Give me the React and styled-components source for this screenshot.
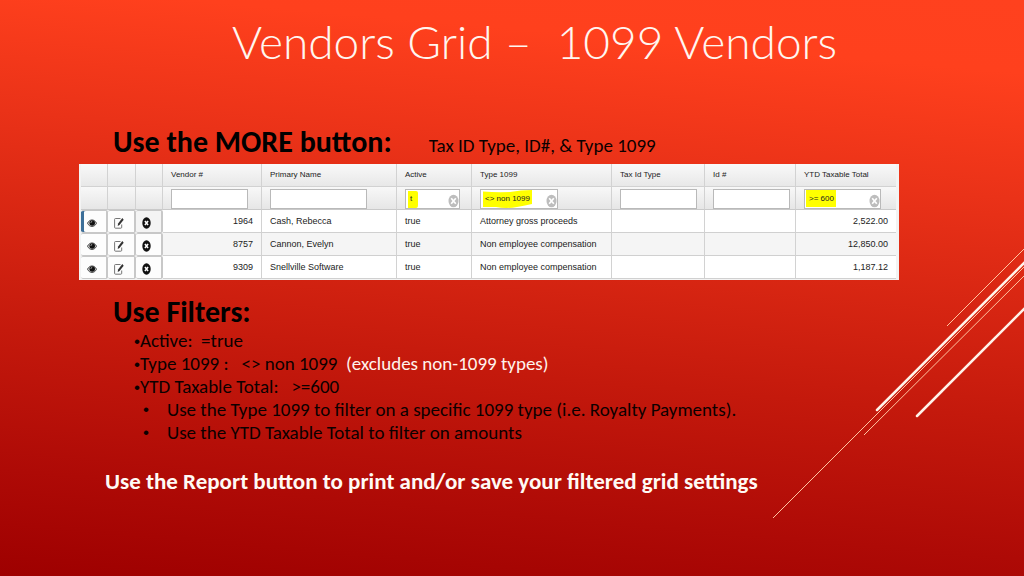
import React from "react";
import styled, { createGlobalStyle } from "styled-components";

const GlobalStyle = createGlobalStyle`
  * { box-sizing: border-box; }
  body { margin: 0; background: #9e0000; }
  input, button { font: inherit; color: inherit; }
`;

const Slide = styled.main`
  position: relative;
  min-height: 100vh;
  overflow: hidden;
  padding: 12px 125px 40px 79px;
  background: linear-gradient(185deg, #ff411e 0%, #ff401d 11%, #ea3218 30%, #c4190c 63%, #ae0a06 84%, #9e0000 100%);
  color: #0c0000;
  font-family: Carlito, Lato, sans-serif;
  font-size: 19px;
  line-height: 23px;
`;

const Title = styled.h1`
  margin: 0 0 54px 153px;
  color: #fff6f0;
  font-family: "Century Gothic", Lato, sans-serif;
  font-size: 46px;
  line-height: 60px;
  font-weight: 300;
  white-space: pre;
`;

const Intro = styled.div`
  display: flex;
  align-items: baseline;
  gap: 37px;
  padding-left: 34px;
  margin-bottom: 6px;
`;

const Heading = styled.h2`
  margin: 0;
  color: #000;
  font-size: 30px;
  line-height: 32px;
  font-weight: 700;
  white-space: nowrap;
`;

const Note = styled.p`
  margin: 0;
`;

const GridFrame = styled.div`
  height: 116px;
  padding: 0 3px 0 2px;
  background: #f3f3f3;
  margin-bottom: 16px;
`;

const Grid = styled.table`
  width: 100%;
  table-layout: fixed;
  border-collapse: separate;
  border-spacing: 0;
  color: #222;
  font-family: "Liberation Sans", Arial, sans-serif;
`;

const HeadCell = styled.th`
  height: 23px;
  padding: 0 0 0 8px;
  border-right: 1px solid #d2d2d2;
  border-bottom: 1px solid #d2d2d2;
  background: linear-gradient(#f9f9f9, #e8e8e8);
  font-size: 8px;
  line-height: 12px;
  font-weight: 400;
  text-align: left;
  white-space: nowrap;
  &:last-child { border-right: 0; }
`;

const FilterCell = styled.td`
  height: 23px;
  padding: 1px 0 0 8px;
  border-right: 1px solid #d2d2d2;
  border-bottom: 1px solid #c9c9c9;
  background: linear-gradient(#f8f8f8, #e6e6e6);
  font-size: 8px;
  line-height: 12px;
  &:last-child { border-right: 0; }
`;

const FilterBox = styled.div`
  position: relative;
  display: flex;
  align-items: center;
  width: ${(p) => p.$width}px;
  height: 20px;
  border: 1px solid #b9b9b9;
  background: #fff;
`;

const FilterInput = styled.input`
  position: relative;
  flex: 1;
  min-width: 0;
  height: 18px;
  padding: 0 0 0 4px;
  border: 0;
  outline: 0;
  background: transparent;
`;

const Marker = styled.svg`
  position: absolute;
  left: 0;
  top: 0;
`;

const ClearButton = styled.button`
  position: relative;
  display: flex;
  align-items: flex-end;
  flex: none;
  width: 11px;
  height: 18px;
  padding: 0;
  border: 0;
  background: transparent;
`;

const Row = styled.tr`
  background: ${(p) => (p.$shaded ? "#f5f5f5" : "#fff")};
`;

const Cell = styled.td`
  height: 23px;
  padding: 0 8px;
  border-right: 1px solid #d2d2d2;
  border-bottom: 1px solid #d0d0d0;
  font-size: 9px;
  line-height: 16px;
  text-align: ${(p) => (p.$numeric ? "right" : "left")};
  white-space: nowrap;
  &:last-child { border-right: 0; }
`;

const ActionCell = styled.td`
  height: 23px;
  padding: 0;
`;

const ActionButton = styled.button`
  display: flex;
  align-items: center;
  justify-content: center;
  width: 100%;
  height: 23px;
  padding: 2px 4px 0 0;
  border: 1px solid #c8c8c8;
  border-width: 1px 2px 1px 0;
  border-radius: 2px;
  box-shadow: ${(p) => (p.$selected ? "inset 3px 0 0 #3d6f99" : "none")};
  background: ${(p) => (p.$soft ? "#f4f4f4" : "#fdfdfd")};
  color: #111;
  svg { flex: none; }
`;

const FilterList = styled.ul`
  margin: -5px 0 0 55px;
  padding: 0;
  list-style: none;
`;

const FilterItem = styled.li`
  white-space: pre;
  &::before {
    content: "•";
    font-family: "Liberation Sans", sans-serif;
    font-size: 17px;
    line-height: 1;
  }
`;

const SubItem = styled.li`
  display: flex;
  padding-left: 9px;
  &::before {
    content: "•";
    flex: none;
    width: 24px;
    font-family: "Liberation Sans", sans-serif;
    font-size: 17px;
  }
`;

const Light = styled.span`
  color: #fff3ec;
`;

const Closing = styled.p`
  margin: 23px 0 0 26px;
  color: #fffaf5;
  font-size: 23px;
  line-height: 28px;
  font-weight: 700;
`;

const Streaks = styled.svg`
  position: absolute;
  right: 0;
  top: 230px;
`;

const EyeIcon = () => (
  <svg width="10" height="10" viewBox="0 0 10 10" aria-hidden="true">
    <path d="M.5 5.200C2.500.9 7.500.9 9.500 5.200 7.500 9.500 2.500 9.500.5 5.200Z" fill="#ddd" stroke="#333" strokeWidth=".9" />
    <circle cx="5.200" cy="5" r="2.800" fill="#111" />
    <path d="M3.900 4.800A1.400 1.400 0 0 1 5.200 3.400" fill="none" stroke="#ccc" strokeWidth=".8" />
  </svg>
);

const EditIcon = () => (
  <svg width="10" height="12" viewBox="0 0 10 12" aria-hidden="true">
    <path d="M6.500 1.500H1.500Q.6 1.500.6 2.400V10.300Q.6 11.200 1.500 11.200H6.800Q7.700 11.200 7.700 10.300V7.500" fill="none" stroke="#666" strokeWidth=".9" />
    <path d="M3.700 9 4.100 6.600 8.300 1.100 9.700 2.700 5.500 8.100Z" fill="#333" />
  </svg>
);

const RemoveIcon = () => (
  <svg width="9" height="12" viewBox="0 0 9 12" aria-hidden="true">
    <ellipse cx="4.500" cy="6" rx="4.200" ry="5.700" fill="#111" />
    <path d="M2.900 4 6.100 8M6.100 4 2.900 8" stroke="#fff" strokeWidth="1.500" />
  </svg>
);

const ClearIcon = () => (
  <svg width="11" height="14" viewBox="0 0 11 14" aria-hidden="true">
    <ellipse cx="5.500" cy="7" rx="5" ry="6.300" fill="#bdbdbd" />
    <path d="M3.200 4.300 7.800 9.700M7.800 4.300 3.200 9.700" stroke="#fff" strokeWidth="1.700" />
  </svg>
);

const columns = [
  { name: "Vendor #", width: 99, input: 77, numeric: true },
  { name: "Primary Name", width: 135, input: 97 },
  { name: "Active", width: 75, input: 55, value: "t", mark: "M2 1H10Q12 1 12 3V15Q12 18 10 18H2Z" },
  {
    name: "Type 1099",
    width: 140,
    input: 78,
    value: "<> non 1099",
    mark: "M2 1.500Q15 2.500 29 2Q40 0 51 0V14Q42 16 36 17Q25 19 15 17L2 17Z",
  },
  { name: "Tax Id Type", width: 93, input: 77 },
  { name: "Id #", width: 91, input: 77 },
  { name: "YTD Taxable Total", input: 77, numeric: true, value: ">= 600", mark: "M1 0H31V17H1Z" },
];

const vendors = [
  ["1964", "Cash, Rebecca", "true", "Attorney gross proceeds", "", "", "2,522.00"],
  ["8757", "Cannon, Evelyn", "true", "Non employee compensation", "", "", "12,850.00"],
  ["9309", "Snellville Software", "true", "Non employee compensation", "", "", "1,187.12"],
];

const actions = [
  { label: "View", Icon: EyeIcon, width: 27 },
  { label: "Edit", Icon: EditIcon, width: 28 },
  { label: "Remove", Icon: RemoveIcon, width: 27 },
];

function Filter({ column }) {
  return (
    <FilterBox $width={column.input}>
      {column.mark && (
        <Marker width={column.input - 2} height="18" aria-hidden="true">
          <path d={column.mark} fill="#ff0" />
        </Marker>
      )}
      <FilterInput aria-label={`Filter ${column.name}`} defaultValue={column.value || ""} />
      {column.value && (
        <ClearButton type="button" aria-label={`Clear ${column.name} filter`}>
          <ClearIcon />
        </ClearButton>
      )}
    </FilterBox>
  );
}

export default function App() {
  return (
    <Slide>
      <GlobalStyle />
      <Streaks width="264" height="300" viewBox="0 0 264 300" fill="none" aria-hidden="true">
        <g stroke="#ffc3a0" strokeWidth="1">
          <path d="M187 96 264 19" />
          <path d="M13 288 264 37" />
          <path d="M104 205 264 46" />
        </g>
        <g stroke="#fff3ea" strokeWidth="2.500" strokeLinecap="round">
          <path d="M117 180 265 32" />
          <path d="M157 186 265 78" />
        </g>
      </Streaks>

      <Title>{"Vendors Grid –  1099 Vendors"}</Title>

      <Intro>
        <Heading>Use the MORE button:</Heading>
        <Note>Tax ID Type, ID#, &amp; Type 1099</Note>
      </Intro>

      <GridFrame>
        <Grid>
          <colgroup>
            {actions.map((a) => <col key={a.label} width={a.width} />)}
            {columns.map((c) => <col key={c.name} width={c.width} />)}
          </colgroup>
          <thead>
            <tr>
              {actions.map((a) => <HeadCell key={a.label} aria-label={a.label} />)}
              {columns.map((c) => <HeadCell key={c.name} scope="col">{c.name}</HeadCell>)}
            </tr>
            <tr>
              {actions.map((a) => <FilterCell key={a.label} />)}
              {columns.map((c) => (
                <FilterCell key={c.name}><Filter column={c} /></FilterCell>
              ))}
            </tr>
          </thead>
          <tbody>
            {vendors.map((vendor, row) => (
              <Row key={vendor[0]} $shaded={row === 1}>
                {actions.map(({ label, Icon }, i) => (
                  <ActionCell key={label}>
                    <ActionButton
                      type="button"
                      aria-label={`${label} ${vendor[1]}`}
                      $selected={row === 0 && i === 0}
                      $soft={row === 0 && i === 2}
                    >
                      <Icon />
                    </ActionButton>
                  </ActionCell>
                ))}
                {vendor.map((text, i) => (
                  <Cell key={columns[i].name} $numeric={columns[i].numeric}>{text}</Cell>
                ))}
              </Row>
            ))}
          </tbody>
        </Grid>
      </GridFrame>

      <Intro>
        <Heading>Use Filters:</Heading>
      </Intro>
      <FilterList>
        <FilterItem>{"Active:  =true"}</FilterItem>
        <FilterItem>{"Type 1099 :   <> non 1099  "}<Light>(excludes non-1099 types)</Light></FilterItem>
        <FilterItem>{"YTD Taxable Total:   >=600"}</FilterItem>
        <SubItem>Use the Type 1099 to filter on a specific 1099 type (i.e. Royalty Payments).</SubItem>
        <SubItem>Use the YTD Taxable Total to filter on amounts</SubItem>
      </FilterList>

      <Closing>Use the Report button to print and/or save your filtered grid settings</Closing>
    </Slide>
  );
}
